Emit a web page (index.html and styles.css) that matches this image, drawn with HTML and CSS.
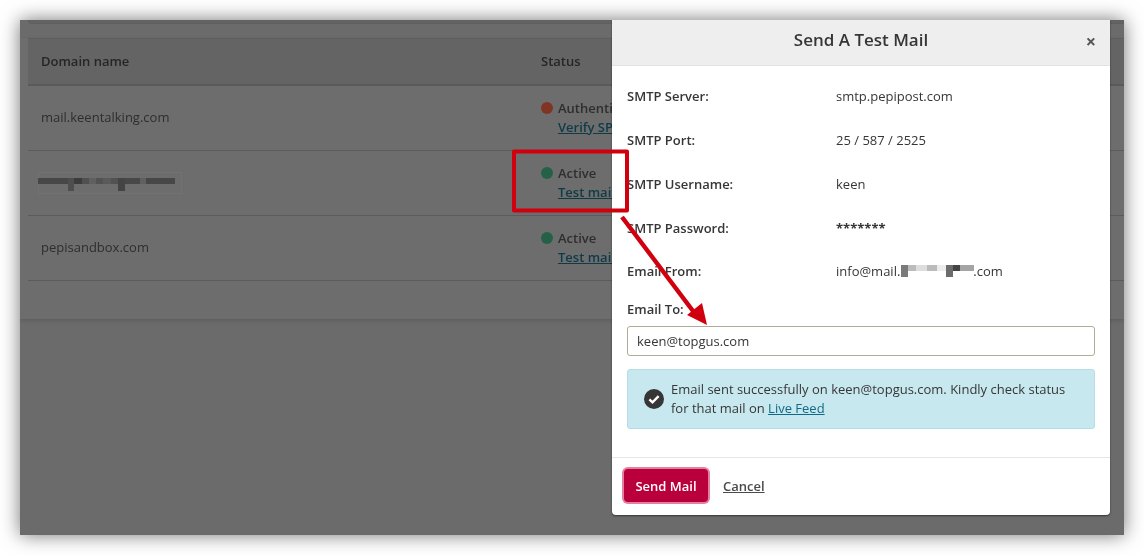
FILE: index.html
```html
<!DOCTYPE html>
<html lang="en">
<head>
<meta charset="utf-8">
<title>Send A Test Mail</title>
<link rel="stylesheet" href="styles.css">
</head>
<body>
<div class="window">
  <div class="page-top"></div>
  <section class="card">
    <div class="table-row table-head">
      <div class="col-domain">Domain name</div>
      <div class="col-status">Status</div>
    </div>
    <div class="table-row">
      <div class="col-domain">mail.keentalking.com</div>
      <div class="col-status">
        <div class="status-line"><span class="dot dot-red"></span>Authenticate</div>
        <a class="status-link" href="#">Verify SPF</a>
      </div>
    </div>
    <div class="table-row">
      <div class="col-domain">
        <svg class="masked-domain" width="144" height="22" viewBox="0 0 144 22">
          <rect class="mask-frame" x="0.5" y="0.5" width="143" height="21"/>
          <g class="mask-blur">
            <rect x="0" y="6" width="137" height="6" fill="#606060"/>
            <rect x="0" y="6" width="30" height="6" fill="#474747"/>
            <rect x="30" y="6" width="6" height="13" fill="#4e4e4e"/>
            <rect x="36" y="6" width="8" height="6" fill="#3c3c3c"/>
            <rect x="44" y="6" width="7" height="6" fill="#505050"/>
            <rect x="58" y="6" width="7" height="6" fill="#525252"/>
            <rect x="65" y="6" width="8" height="6" fill="#5a5a5a"/>
            <rect x="73" y="6" width="7" height="6" fill="#525252"/>
            <rect x="80" y="6" width="7" height="13" fill="#444"/>
            <rect x="87" y="6" width="15" height="6" fill="#484848"/>
            <rect x="108" y="6" width="29" height="6" fill="#474747"/>
          </g>
        </svg>
      </div>
      <div class="col-status">
        <div class="status-line"><span class="dot dot-green"></span>Active</div>
        <a class="status-link" href="#">Test mail</a>
      </div>
    </div>
    <div class="table-row">
      <div class="col-domain">pepisandbox.com</div>
      <div class="col-status">
        <div class="status-line"><span class="dot dot-green"></span>Active</div>
        <a class="status-link" href="#">Test mail</a>
      </div>
    </div>
  </section>

  <div class="modal">
    <header class="modal-head">
      <h2 class="modal-title">Send A Test Mail</h2>
      <span class="modal-close">&times;</span>
    </header>
    <div class="modal-body">
      <div class="info-row"><span class="info-label">SMTP Server:</span><span>smtp.pepipost.com</span></div>
      <div class="info-row"><span class="info-label">SMTP Port:</span><span>25 / 587 / 2525</span></div>
      <div class="info-row"><span class="info-label">SMTP Username:</span><span>keen</span></div>
      <div class="info-row"><span class="info-label">SMTP Password:</span><span class="stars">*******</span></div>
      <div class="info-row"><span class="info-label">Email From:</span><span class="from-value">info@mail.<svg class="masked-from" width="75" height="16" viewBox="0 0 75 16"><g class="mask-soft"><rect x="2" y="2" width="7" height="12" fill="#7a7a7a"/><rect x="9" y="2" width="8" height="6" fill="#bbb"/><rect x="17" y="2" width="11" height="6" fill="#ddd"/><rect x="28" y="2" width="10" height="6" fill="#bbb"/><rect x="38" y="2" width="9" height="6" fill="#ececec"/><rect x="47" y="2" width="7" height="12" fill="#6c6c6c"/><rect x="54" y="2" width="7" height="6" fill="#444"/><rect x="61" y="2" width="14" height="6" fill="#a4a4a4"/></g></svg>.com</span></div>
      <label class="field-label" for="email-to">Email To:</label>
      <input class="field-input" id="email-to" type="text" value="keen@topgus.com">
      <div class="alert">
        <svg class="alert-icon" width="20" height="20" viewBox="0 0 20 20">
          <circle cx="10" cy="10" r="10" fill="#363636"/>
          <path d="M5.4 10.4 8.5 13.4 14.6 7.2" fill="none" stroke="#fff" stroke-width="2.4"/>
        </svg>
        <p class="alert-text">Email sent successfully on keen@topgus.com. Kindly check status for that mail on <a class="alert-link" href="#">Live Feed</a></p>
      </div>
    </div>
    <footer class="modal-foot">
      <button class="btn-send" type="button">Send Mail</button>
      <a class="btn-cancel" href="#">Cancel</a>
    </footer>
  </div>

  <svg class="annotation" width="1104" height="515" viewBox="0 0 1104 515">
    <rect x="494" y="131.5" width="113" height="59" fill="none" stroke="#d0000f" stroke-width="4" stroke-linejoin="round"/>
    <path d="M602 197 676 295" fill="none" stroke="#d0000f" stroke-width="4.5"/>
    <path d="M687 305 667 295 682 283Z" fill="#d0000f"/>
  </svg>
</div>
</body>
</html>
```
FILE: styles.css
```css
* { box-sizing: border-box; }
html, body { margin: 0; padding: 0; }
body {
  background: #fff;
  font-family: "Open Sans", "Liberation Sans", sans-serif;
  font-size: 13px;
  color: #363636;
  height: 555px;
  overflow: hidden;
}
.window {
  position: relative;
  width: 1104px;
  height: 515px;
  margin: 20px;
  background: #6b6b6b;
  box-shadow: 0 0 18px rgba(0,0,0,.55);
  overflow: hidden;
}
.page-top {
  height: 4px;
  margin: 0 0 14px 8px;
  border-bottom: 1px solid #5f5f5f;
  border-left: 1px solid #5f5f5f;
  border-bottom-left-radius: 4px;
  background: #636363;
}
.card {
  height: 281px;
  padding-left: 8px;
  background: #6d6d6d;
  box-shadow: 0 2px 4px rgba(0,0,0,.12);
  color: #2e2e2e;
  will-change: transform;
}
.table-row {
  display: flex;
  align-items: center;
  height: 65px;
  padding-left: 13px;
  border-bottom: 1px solid #5c5c5c;
}
.table-head {
  height: 48px;
  padding-bottom: 2px;
  background: #646464;
  border-top: 1px solid #5e5e5e;
  border-bottom: 2px solid #5a5a5a;
  font-weight: 600;
  color: #262626;
}
.col-domain { width: 500px; display: flex; align-items: center; padding-bottom: 2px; }
.col-status { flex: 1; }
.table-head .col-domain { padding-bottom: 0; }
.masked-domain { margin: 2px 0 0 -3px; display: block; }
.mask-frame { fill: none; stroke: #727272; }
.mask-blur { filter: blur(.6px); }
.mask-soft { filter: blur(.5px); }
.status-line {
  display: flex;
  align-items: center;
  line-height: 19px;
  font-weight: 600;
}
.dot {
  width: 12px;
  height: 12px;
  margin-right: 5px;
  border-radius: 50%;
  transform: translateY(-1px);
}
.dot-red { background: #803424; }
.dot-green { background: #256146; }
.status-link {
  display: block;
  margin-left: 17px;
  line-height: 19px;
  font-weight: 600;
  color: #0f3a48;
  white-space: nowrap;
}
.modal {
  position: absolute;
  left: 592px;
  top: 0;
  width: 498px;
  height: 495px;
  display: flex;
  flex-direction: column;
  background: #fff;
  border-radius: 0 0 4px 4px;
  box-shadow: 0 1px 2px rgba(0,0,0,.5);
  will-change: transform;
}
.modal-head {
  position: relative;
  flex: none;
  height: 46px;
  display: flex;
  align-items: center;
  justify-content: center;
  background: #eee;
  border-bottom: 1px solid #e2e2e2;
}
.modal-title {
  margin: 0 0 7px;
  font-size: 17px;
  font-weight: 600;
  color: #363636;
}
.modal-close {
  position: absolute;
  right: 14px;
  top: 10px;
  font-size: 18px;
  line-height: 22px;
  font-weight: 700;
  color: #555;
}
.modal-body { flex: 1; padding: 8px 15px 0; }
.info-row {
  display: flex;
  align-items: center;
  height: 44px;
  color: #363636;
}
.info-row:nth-child(5) { height: 42px; }
.info-label { width: 209px; font-weight: 600; }
.stars { font-weight: 700; }
.from-value { display: inline-flex; align-items: center; }
.masked-from { display: block; margin: 0 -1px; }
.field-label {
  display: block;
  margin-top: 8px;
  line-height: 18px;
  font-weight: 600;
}
.field-input {
  display: block;
  width: 468px;
  height: 30px;
  margin-top: 8px;
  padding: 0 9px;
  border: 1px solid #b0ac96;
  border-radius: 3px;
  background: #fff;
  font: inherit;
  color: #363636;
  outline: none;
}
.alert {
  display: flex;
  align-items: center;
  height: 60px;
  margin-top: 13px;
  padding: 0 16px;
  background: #c8e8ef;
  border: 1px solid #b5dde6;
  border-radius: 3px;
}
.alert-icon { flex: none; margin-right: 7px; }
.alert-text { margin: 0; line-height: 19px; }
.alert-link { color: #0f6b85; }
.modal-foot {
  flex: none;
  height: 58px;
  display: flex;
  align-items: center;
  padding: 0 12px 2px;
  border-top: 1px solid #e6e6e6;
}
.btn-send {
  width: 84px;
  height: 33px;
  padding: 0;
  background: #b9003c;
  border: 0;
  border-radius: 4px;
  box-shadow: 0 0 0 2px #e57fa0;
  color: #fff;
  font: 600 13px "Open Sans", "Liberation Sans", sans-serif;
}
.btn-cancel {
  margin-left: 15px;
  font-weight: 600;
  color: #4a4a4a;
}
.annotation {
  position: absolute;
  left: 0;
  top: 0;
  pointer-events: none;
}
```
